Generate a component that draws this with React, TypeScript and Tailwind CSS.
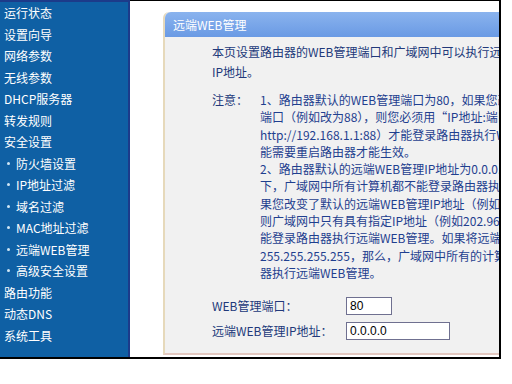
import React from 'react';

const menu: { label: string; sub?: boolean }[] = [
  { label: '运行状态' },
  { label: '设置向导' },
  { label: '网络参数' },
  { label: '无线参数' },
  { label: 'DHCP服务器' },
  { label: '转发规则' },
  { label: '安全设置' },
  { label: '防火墙设置', sub: true },
  { label: 'IP地址过滤', sub: true },
  { label: '域名过滤', sub: true },
  { label: 'MAC地址过滤', sub: true },
  { label: '远端WEB管理', sub: true },
  { label: '高级安全设置', sub: true },
  { label: '路由功能' },
  { label: '动态DNS' },
  { label: '系统工具' },
];

const noteLines = [
  '1、路由器默认的WEB管理端口为80，如果您改变了WEB管理',
  '端口（例如改为88），则您必须用“IP地址:端口”的方式（例如',
  'http://192.168.1.1:88）才能登录路由器执行WEB管理。本功',
  '能需要重启路由器才能生效。',
  '2、路由器默认的远端WEB管理IP地址为0.0.0.0，在此默认状态',
  '下，广域网中所有计算机都不能登录路由器执行远端WEB管理。如',
  '果您改变了默认的远端WEB管理IP地址（例如改为202.96.12.8），',
  '则广域网中只有具有指定IP地址（例如202.96.12.8）的计算机才',
  '能登录路由器执行远端WEB管理。如果将远端WEB管理IP地址设为',
  '255.255.255.255，那么，广域网中所有的计算机都可以登录路由',
  '器执行远端WEB管理。',
];

const App: React.FC = () => {
  return (
    <div className="w-[512px] h-[384px] bg-white overflow-hidden font-['Noto_Sans_CJK_SC',sans-serif] text-[12px]">
      <div className="flex w-[501px] h-[359px] border-b-2 border-black">
        {/* sidebar */}
        <div className="w-[130px] shrink-0 bg-[#0f60a4] border-t-2 border-r-2 border-[#1c3b8a] text-white leading-[21.5px]">
          {menu.map((m) => (
            <div key={m.label} className={m.sub ? 'flex items-center pl-[7px] whitespace-nowrap' : 'pl-[4px] whitespace-nowrap'}>
              {m.sub && <span className="w-[3px] h-[3px] rounded-full bg-[#cfe6f5] mr-[6px]" />}
              <span>{m.label}</span>
            </div>
          ))}
        </div>

        {/* main */}
        <div className="flex-1 border-t border-r-2 border-black overflow-hidden flex flex-col">
          <div className="ml-[33px] mt-[11px] mb-[2px] flex-1 w-[420px] flex flex-col border-l-2 border-b-2 border-l-[#e6d9bb] border-b-[#e3c8c0] rounded-tl-md bg-[#f1f1f1]">
            <div className="h-[25px] shrink-0 flex items-center pl-[8px] rounded-tl-md bg-gradient-to-b from-[#8ab3ee] to-[#6a9ae4] text-white">
              远端WEB管理
            </div>
            <div className="pl-[47px] pt-[5px] text-[#22397a] whitespace-nowrap">
              <div className="leading-[20px]">
                <div>本页设置路由器的WEB管理端口和广域网中可以执行远端WEB管理的计算机的</div>
                <div>IP地址。</div>
              </div>
              <div className="flex mt-[9px] leading-[17.3px] text-[#1f3f8f]">
                <div className="w-[48px] shrink-0 text-[#22397a]">注意：</div>
                <div>
                  {noteLines.map((l) => (
                    <div key={l}>{l}</div>
                  ))}
                </div>
              </div>
              <div className="mt-[12px]">
                <div className="flex items-center h-[25px]">
                  <div className="w-[134px]">WEB管理端口：</div>
                  <div className="w-[46px] h-[18px] border border-[#6f7090] bg-white pl-[3px] leading-[16px] text-black font-['Liberation_Sans',sans-serif]">80</div>
                </div>
                <div className="flex items-center h-[25px]">
                  <div className="w-[134px]">远端WEB管理IP地址：</div>
                  <div className="w-[104px] h-[18px] border border-[#6f7090] bg-white pl-[3px] leading-[16px] text-black font-['Liberation_Sans',sans-serif]">0.0.0.0</div>
                </div>
              </div>
            </div>
          </div>
        </div>
      </div>
    </div>
  );
};

export default App;
